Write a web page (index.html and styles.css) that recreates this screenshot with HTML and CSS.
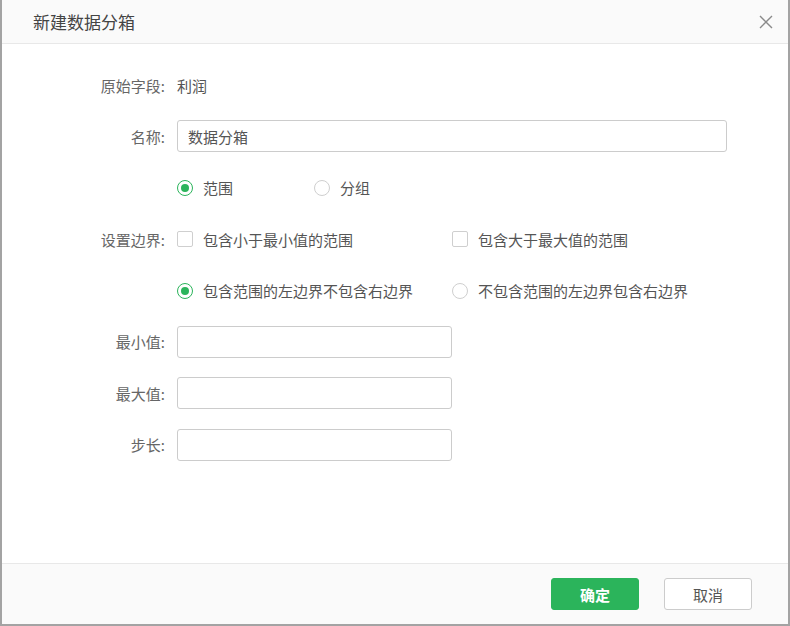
FILE: index.html
```html
<!DOCTYPE html>
<html lang="zh">
<head>
<meta charset="utf-8">
<link rel="stylesheet" href="styles.css">
</head>
<body>
<div class="dialog">
  <div class="header">
    <span class="title">新建数据分箱</span>
    <svg class="close" width="14" height="14" viewBox="0 0 14 14"><path d="M1 1L13 13M13 1L1 13" stroke="#8a8a8a" stroke-width="1.4" fill="none"/></svg>
  </div>
  <div class="body">
    <div class="row">
      <div class="label">原始字段:</div>
      <div class="value">利润</div>
    </div>
    <div class="row">
      <div class="label">名称:</div>
      <div class="input wide">数据分箱</div>
    </div>
    <div class="row">
      <div class="label"></div>
      <div class="opt short"><span class="radio on"></span><span>范围</span></div>
      <div class="opt"><span class="radio"></span><span>分组</span></div>
    </div>
    <div class="row">
      <div class="label">设置边界:</div>
      <div class="opt long"><span class="check"></span><span>包含小于最小值的范围</span></div>
      <div class="opt"><span class="check"></span><span>包含大于最大值的范围</span></div>
    </div>
    <div class="row">
      <div class="label"></div>
      <div class="opt long"><span class="radio on"></span><span>包含范围的左边界不包含右边界</span></div>
      <div class="opt"><span class="radio"></span><span>不包含范围的左边界包含右边界</span></div>
    </div>
    <div class="row">
      <div class="label">最小值:</div>
      <div class="input small"></div>
    </div>
    <div class="row">
      <div class="label">最大值:</div>
      <div class="input small"></div>
    </div>
    <div class="row">
      <div class="label">步长:</div>
      <div class="input small"></div>
    </div>
  </div>
  <div class="footer">
    <button class="btn primary">确定</button>
    <button class="btn">取消</button>
  </div>
</div>
</body>
</html>
```
FILE: styles.css
```css
html, body { margin: 0; padding: 0; }
body {
  background: #a3a3a3;
  font-family: "Noto Sans CJK SC", "Liberation Sans", sans-serif;
  width: 790px;
  height: 626px;
  overflow: hidden;
}
.dialog {
  margin-left: 2px;
  width: 786px;
  height: 624px;
  background: #fff;
  display: flex;
  flex-direction: column;
}
.header {
  height: 43px;
  background: #fafafa;
  border-bottom: 1px solid #e8e8e8;
  display: flex;
  align-items: center;
  justify-content: space-between;
  padding: 0 15px 0 31px;
}
.title {
  font-size: 17px;
  color: #444;
}
.close { display: block; }
.body {
  flex: 1;
  padding-top: 25px;
}
.row {
  display: flex;
  align-items: center;
  height: 32px;
  margin-bottom: 19.4px;
  font-size: 15px;
  color: #555;
}
.label {
  width: 163px;
  text-align: right;
  color: #666;
  margin-right: 12px;
  flex: none;
}
.value { color: #555; }
.input {
  box-sizing: border-box;
  height: 32px;
  border: 1px solid #ccc;
  border-radius: 3px;
  padding: 0 10px;
  display: flex;
  align-items: center;
  color: #555;
}
.wide { width: 550px; }
.small { width: 275px; }
.opt {
  display: flex;
  align-items: center;
}
.short { width: 137px; }
.long { width: 275px; }
.radio {
  box-sizing: border-box;
  width: 16px;
  height: 16px;
  border: 1px solid #cfcfcf;
  border-radius: 50%;
  margin-right: 10px;
  position: relative;
  flex: none;
}
.radio.on { border-color: #2bb45b; }
.radio.on::after {
  content: "";
  position: absolute;
  left: 3px;
  top: 3px;
  width: 8px;
  height: 8px;
  border-radius: 50%;
  background: #2bb45b;
}
.check {
  box-sizing: border-box;
  width: 16px;
  height: 16px;
  border: 1px solid #cfcfcf;
  border-radius: 2px;
  margin-right: 10px;
  flex: none;
}
.footer {
  height: 61px;
  box-sizing: border-box;
  background: #fafafa;
  border-top: 1px solid #e8e8e8;
  display: flex;
  justify-content: flex-end;
  align-items: flex-start;
  padding: 14px 36px 0 0;
  gap: 25px;
}
.btn {
  box-sizing: border-box;
  width: 88px;
  height: 32px;
  border: 1px solid #ccc;
  border-radius: 3px;
  background: #fff;
  color: #555;
  font-family: "Noto Sans CJK SC", "Liberation Sans", sans-serif;
  font-size: 15px;
  padding: 0;
}
.btn.primary {
  background: #2bb45b;
  border-color: #2bb45b;
  color: #fff;
  font-weight: bold;
}
```
